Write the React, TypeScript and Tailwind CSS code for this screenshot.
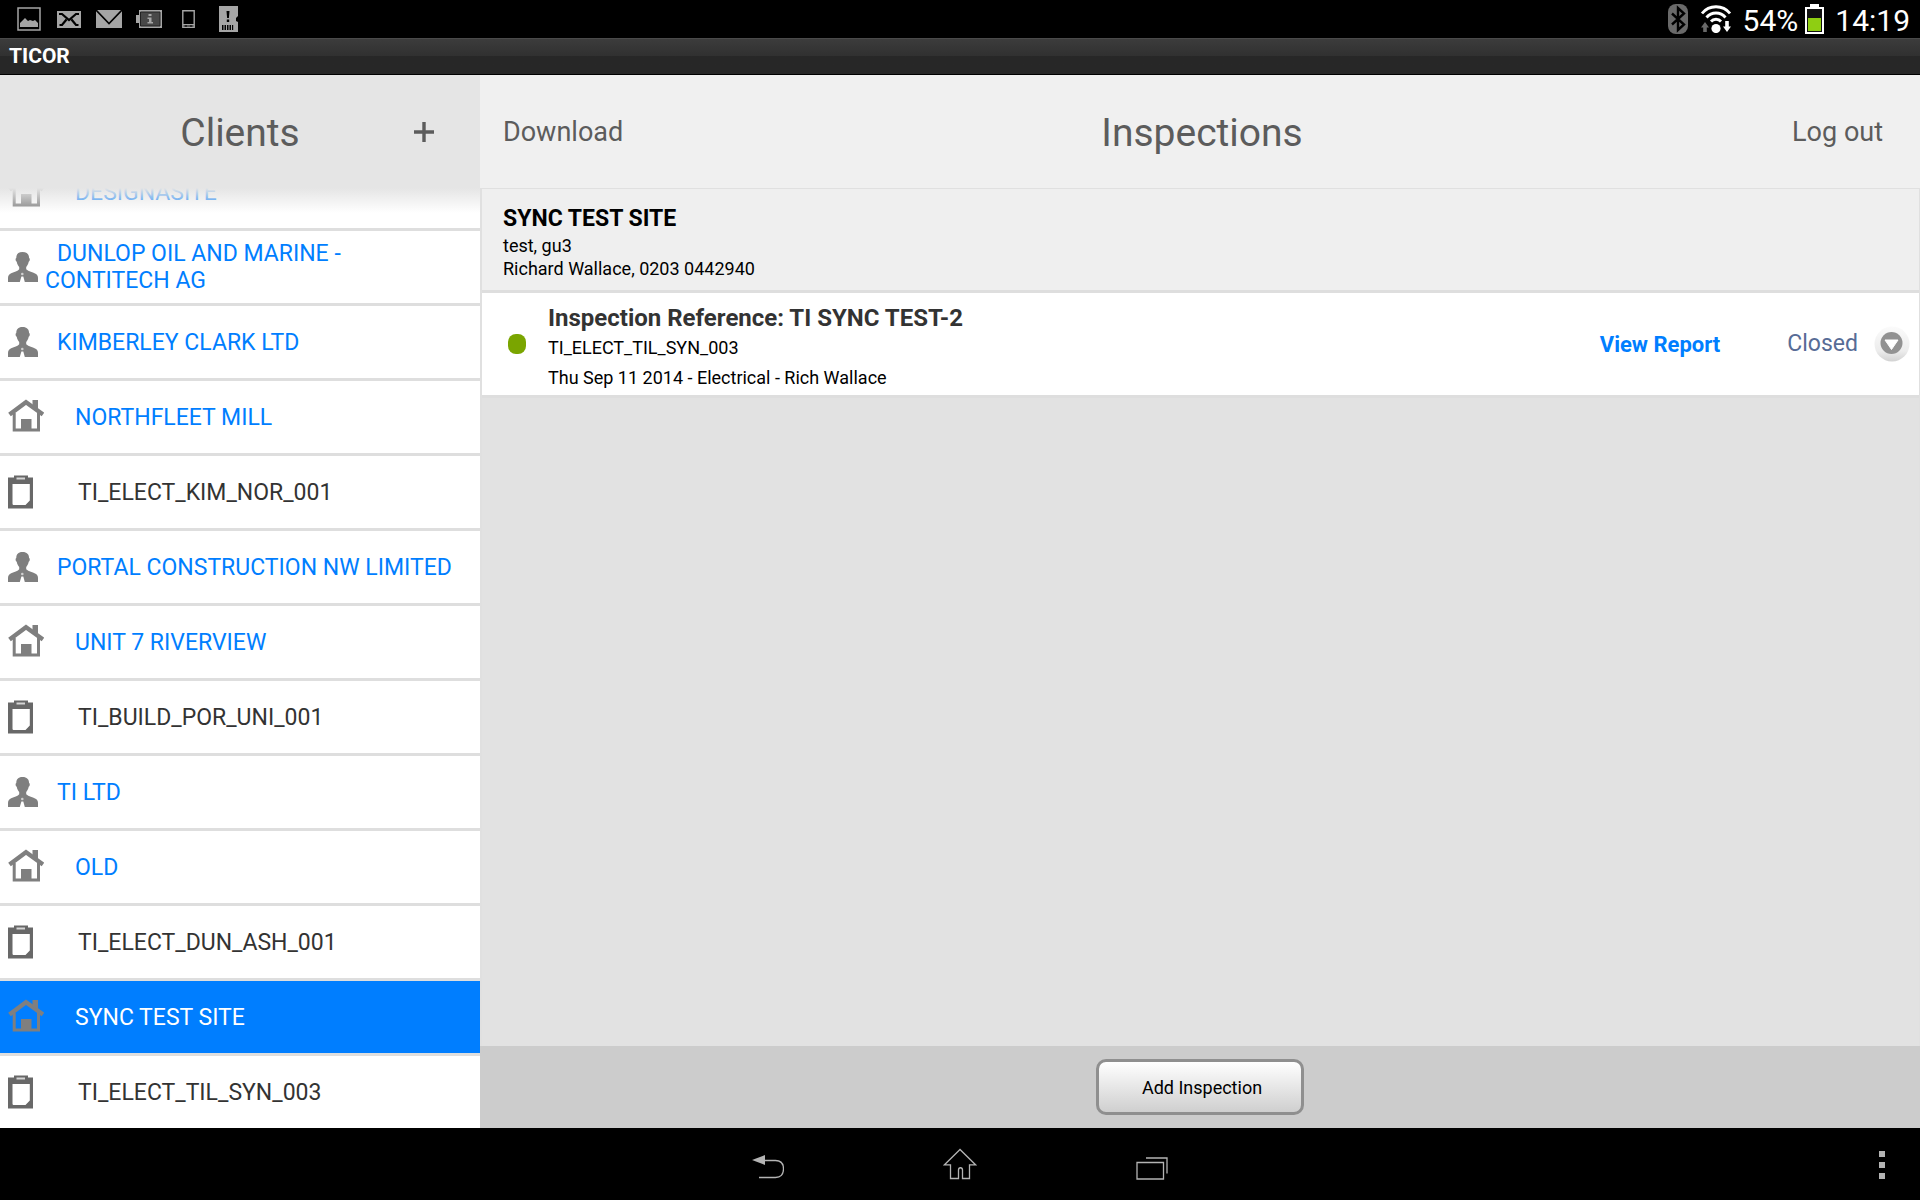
import clsx from 'clsx'

type RowKind = 'client' | 'site' | 'item'

interface Row {
  kind: RowKind
  label: string
  selected?: boolean
}

const rows: Row[] = [
  { kind: 'site', label: 'DESIGNASITE' },
  { kind: 'client', label: 'DUNLOP OIL AND MARINE - CONTITECH AG' },
  { kind: 'client', label: 'KIMBERLEY CLARK LTD' },
  { kind: 'site', label: 'NORTHFLEET MILL' },
  { kind: 'item', label: 'TI_ELECT_KIM_NOR_001' },
  { kind: 'client', label: 'PORTAL CONSTRUCTION NW LIMITED' },
  { kind: 'site', label: 'UNIT 7 RIVERVIEW' },
  { kind: 'item', label: 'TI_BUILD_POR_UNI_001' },
  { kind: 'client', label: 'TI LTD' },
  { kind: 'site', label: 'OLD' },
  { kind: 'item', label: 'TI_ELECT_DUN_ASH_001' },
  { kind: 'site', label: 'SYNC TEST SITE', selected: true },
  { kind: 'item', label: 'TI_ELECT_TIL_SYN_003' },
]

function PersonIcon() {
  return (
    <svg width="30" height="30" viewBox="0 0 30 30" fill="#7f7f7f" className="shrink-0">
      <path d="M14.500 0C10 0 8.300 2.500 8.300 6c-1 .300-1 3.100.4 3.700.5 2.500 1.400 4 2.500 5.300v2.300C9.500 19.500 5 20.300 2 22 .600 23 0 24 0 26v4h11.800l1.600-5.500h1.900L16.800 30H30v-4c0-2-.6-3-2-4-3-1.700-7.500-2.500-9.800-4.700V15c1.100-1.300 2-2.800 2.500-5.300 1.400-.6 1.400-3.400.4-3.700C21 2.500 19 0 14.500 0z" />
      <circle cx="14.300" cy="22" r="1.300" fill="#d0d0d0" />
    </svg>
  )
}

function HouseIcon() {
  return (
    <svg width="36" height="36" viewBox="0 0 36 36" className="shrink-0">
      <path d="M6.200 14v17h24.300V14" fill="none" stroke="#7f7f7f" strokeWidth="3" />
      <path d="M1.500 15.500L18 3.200l17 12.300" fill="none" stroke="#7f7f7f" strokeWidth="4.400" />
      <path d="M24.500 1H30v10l-5.500-4z" fill="#7f7f7f" />
      <path d="M13 20h10.500v12H13z" fill="#7f7f7f" />
    </svg>
  )
}

function ClipboardIcon() {
  return (
    <svg width="25" height="34" viewBox="0 0 25 34" className="shrink-0">
      <path
        fillRule="evenodd"
        fill="#686868"
        d="M0 2.500h6V.500h14v2h5v31H0zM4.500 9v19.500c0 1 .5 1.500 1.500 1.500h11.500l4.300-4.500V9z"
      />
      <path d="M8.500 2.500h8.500v2H8.500z" fill="#d5d5d5" />
    </svg>
  )
}

function ClientRow({ row }: { row: Row }) {
  return (
    <li className="border-b-[3px] border-[#dedede] last:border-b-0">
      <button
        className={clsx(
          'flex h-[72px] w-full items-center pl-2 text-left text-[23px] leading-[27px]',
          row.selected ? 'bg-[#007eff] text-white' : 'bg-white',
          !row.selected && (row.kind === 'item' ? 'text-[#333]' : 'text-[#007eff]'),
        )}
      >
        {row.kind === 'client' && <PersonIcon />}
        {row.kind === 'site' && <HouseIcon />}
        {row.kind === 'item' && <ClipboardIcon />}
        <span
          className={clsx(
            row.kind === 'client' && 'pl-[7px] pr-4 indent-3',
            row.kind === 'site' && 'pl-[31px]',
            row.kind === 'item' && 'pl-[45px]',
          )}
        >
          {row.label}
        </span>
      </button>
    </li>
  )
}

function StatusBar() {
  return (
    <div className="flex h-[38px] shrink-0 items-center justify-between bg-black pl-[17px] pr-[10px] text-white">
      <div className="flex items-center">
        <svg width="24" height="24" viewBox="0 0 24 24" className="mr-4">
          <path d="M1 1h22v22H1z" fill="none" stroke="#a5a5a5" strokeWidth="1.500" />
          <path d="M3 20v-4l5-5 3 3 2-1 3 1 2-1 3 3v4z" fill="#a5a5a5" />
        </svg>
        <svg width="24" height="17" viewBox="0 0 24 17" className="mr-[15px]">
          <path d="M0 0h24v17H0z" fill="#a5a5a5" />
          <path d="M2 3h3l7 6 7-6h3M2.500 14H5l4.500-5.500M21.500 14H19l-4.500-5.500" fill="none" stroke="#000" strokeWidth="2.200" />
        </svg>
        <svg width="26" height="18" viewBox="0 0 26 18" className="mr-[14px]">
          <path d="M0 0h26v18H0z" fill="#a5a5a5" />
          <path d="M0 0l13 13.500L26 0" fill="none" stroke="#000" strokeWidth="1.600" />
        </svg>
        <svg width="26" height="18" viewBox="0 0 26 18" className="mr-5">
          <path d="M0 5h3V0h23v18H3v-5H0z" fill="#a5a5a5" />
          <path d="M4.500 2h19.500v14H4.500z" fill="#484848" stroke="#222" />
          <path d="M12.500 4h3v2h-3zM11.500 7.500h4V12H17v1.500h-5.500V12H13V9h-1.500z" fill="#a5a5a5" />
        </svg>
        <svg width="13" height="18" viewBox="0 0 13 18" className="mr-6">
          <path d="M.8.800h11.400v16.400H.800zM1 14.800h11" fill="none" stroke="#a5a5a5" strokeWidth="1.400" />
          <path d="M4 15v2M9 15v2" stroke="#000" />
        </svg>
        <svg width="19" height="26" viewBox="0 0 19 26">
          <path d="M0 0h19v10l-2 2v3l2 1v10H0z" fill="#a5a5a5" />
          <path d="M7.500 5h3l-.6 7H8.100zM7.800 13.500h2.400V16H7.800zM3 19h1.500v5H3zM5.500 19H7v5H5.500zM8 19h1.500v5H8zM10.500 19H12v5h-1.500zM13 19h1.200v5H13z" fill="#000" />
        </svg>
      </div>
      <div className="flex items-center text-[30px] leading-[34px]">
        <svg width="20" height="30" viewBox="0 0 20 30" className="mr-[13px]">
          <rect width="20" height="30" rx="8" fill="#6a6a6a" />
          <path d="M4 9.500l12 11-6 5.500V4l6 5.500-12 11" fill="none" stroke="#000" strokeWidth="2.400" />
        </svg>
        <svg width="30" height="28" viewBox="0 0 30 28" className="mr-3">
          <g fill="none" stroke="#fff" strokeWidth="2.800">
            <path d="M1 8.500C8-.5 22-.5 29 8.500" />
            <path d="M5.500 12.500c5-6 14-6 19 0" />
            <path d="M10 16.500c2.500-3 7.500-3 10 0" />
          </g>
          <circle cx="15" cy="23.500" r="4.600" fill="#fff" />
          <path d="M4 17l4 5.500H5.800V27H2.200v-4.500H0z" fill="#6a6a6a" />
          <path d="M26 27l4-5.500h-2.200V16h-3.600v5.500H22z" fill="#fff" />
        </svg>
        <span className="mr-[7px] pt-1">54%</span>
        <svg width="19" height="30" viewBox="0 0 19 30" className="mr-[11px]">
          <path d="M5 0h9v3h5v27H0V3h5z" fill="#fff" />
          <path d="M2 5h15v23H2z" fill="#111" />
          <path d="M3 14h13v13H3z" fill="#8fce12" />
        </svg>
        <span className="pt-1">14:19</span>
      </div>
    </div>
  )
}

function Sidebar() {
  return (
    <aside className="flex w-1/4 shrink-0 flex-col">
      <header className="grid h-[113px] shrink-0 grid-cols-[1fr_auto_1fr] items-center bg-[#e5e5e5] text-[#5c5c5c]">
        <h1 className="col-start-2 pt-[2px] text-[39px] leading-[48px]">Clients</h1>
        <button aria-label="Add client" className="mr-[46px] justify-self-end">
          <svg width="20" height="20" viewBox="0 0 20 20" fill="#5c5c5c">
            <path d="M8.300 0h3.400v8.300H20v3.400h-8.300V20H8.300v-8.300H0V8.300h8.300z" />
          </svg>
        </button>
      </header>
      <div className="relative flex min-h-0 flex-1 flex-col justify-end overflow-hidden bg-white">
        <ul>
          {rows.map((row) => (
            <ClientRow key={row.label} row={row} />
          ))}
        </ul>
        {/* fade under the header */}
        <div className="pointer-events-none absolute inset-x-0 top-0 h-[25px] bg-linear-to-b from-[#e5e5e5] to-[#e5e5e5]/0" />
      </div>
    </aside>
  )
}

function DisclosureIcon() {
  return (
    <svg width="36" height="36" viewBox="0 0 36 36">
      <defs>
        <linearGradient id="ring" x1="0" y1="0" x2="0" y2="1">
          <stop offset="0" stopColor="#fbfbfb" />
          <stop offset="0.700" stopColor="#ececec" />
          <stop offset="1" stopColor="#d2d2d2" />
        </linearGradient>
      </defs>
      <circle cx="18" cy="18" r="17.500" fill="url(#ring)" />
      <circle cx="17.500" cy="17" r="11" fill="#929292" />
      <path d="M11 14h13l-6.500 9.500z" fill="#fff" stroke="#fff" strokeLinejoin="round" />
    </svg>
  )
}

function Inspections() {
  return (
    <main className="flex min-w-0 flex-1 flex-col bg-[#e2e2e2]">
      <header className="grid h-[113px] shrink-0 grid-cols-[1fr_auto_1fr] items-center bg-[#f0f0f0] text-[27px] leading-8 text-[#5c5c5c]">
        <button className="ml-[23px] justify-self-start">Download</button>
        <h1 className="pl-1 pt-[2px] text-[39px] leading-[48px]">Inspections</h1>
        <button className="mr-[37px] justify-self-end">Log out</button>
      </header>

      <div className="flex-1 border-l-2 border-r border-t border-[#e0e0e0]">
        <section className="border-b-[3px] border-[#dedede] bg-[#efefef] pb-[10px] pl-[21px] pt-[14px] text-lg leading-[23px] text-black">
          <h2 className="text-[23px] font-bold leading-[31px]">SYNC TEST SITE</h2>
          <p>test, gu3</p>
          <p>Richard Wallace, 0203 0442940</p>
        </section>

        <article className="flex h-[105px] items-center border-b-[3px] border-[#dedede] bg-white pl-[26px] pr-[9px]">
          <span className="h-5 w-[18px] rounded-lg bg-[#7aa500]" />
          <div className="ml-[22px] flex-1 pt-2 text-lg leading-[30px] text-black">
            <h3 className="text-2xl font-bold leading-[30px] text-[#333]">
              Inspection Reference: TI SYNC TEST-2
            </h3>
            <p>TI_ELECT_TIL_SYN_003</p>
            <p>Thu Sep 11 2014 - Electrical - Rich Wallace</p>
          </div>
          <a href="#report" className="mr-[67px] text-[22px] font-bold text-[#007eff]">View Report</a>
          <span className="mr-4 text-[23px] text-[#576c96]">Closed</span>
          <button aria-label="Show details">
            <DisclosureIcon />
          </button>
        </article>
      </div>

      <footer className="flex h-[82px] shrink-0 items-center justify-center bg-[#ccc]">
        <button className="h-14 w-[208px] rounded-[10px] border-[3px] border-[#8f8f8f] bg-linear-to-b from-white to-[#cfcfcf] pl-1 pt-[2px] text-lg text-black">
          Add Inspection
        </button>
      </footer>
    </main>
  )
}

function NavBar() {
  return (
    <nav className="grid h-[72px] shrink-0 grid-cols-[1fr_auto_1fr] items-center bg-black">
      <div className="col-start-2 flex items-center">
        <button aria-label="Back" className="flex w-48 justify-center pt-[6px]">
          <svg width="32" height="24" viewBox="0 0 32 24">
            <path d="M13 0v10L0 5z" fill="#b4b4b4" />
            <path d="M12 5.500h11.500c5 0 8 3 8 8.500s-3 8.500-8 8.500H7" fill="none" stroke="#b4b4b4" strokeWidth="1.300" />
          </svg>
        </button>
        <button aria-label="Home" className="flex w-48 justify-center">
          <svg width="34" height="32" viewBox="0 0 34 32" fill="none" stroke="#b4b4b4" strokeWidth="1.300">
            <path d="M17 1.500L1.500 16.800h6V30.500h8V22c0-3 4-3 4 0v8.500h7V16.800h6z" />
          </svg>
        </button>
        <button aria-label="Recent apps" className="flex w-48 justify-center pt-2">
          <svg width="32" height="23" viewBox="0 0 32 23" fill="none" stroke="#b4b4b4" strokeWidth="1.300">
            <path d="M1 5.500h26.500V22H1zM10 1h21v15.500" />
          </svg>
        </button>
      </div>
      <button aria-label="Menu" className="mr-[35px] flex flex-col gap-[5px] justify-self-end pt-[2px]">
        <span className="size-[6px] bg-[#b4b4b4]" />
        <span className="size-[6px] bg-[#b4b4b4]" />
        <span className="size-[6px] bg-[#b4b4b4]" />
      </button>
    </nav>
  )
}

export default function App() {
  return (
    <div className="flex h-screen flex-col overflow-hidden bg-black font-[Roboto,sans-serif]">
      <StatusBar />
      <div className="flex h-[37px] shrink-0 items-center border-b border-t border-b-black border-t-[#4a4a4a] bg-linear-to-b from-[#3c3c3c] from-0% via-[#303030] via-50% to-[#272727] to-50% pb-[2px] pl-[9px] text-[21px] leading-6 font-bold text-white">
        TICOR
      </div>
      <div className="flex min-h-0 flex-1">
        <Sidebar />
        <Inspections />
      </div>
      <NavBar />
    </div>
  )
}
